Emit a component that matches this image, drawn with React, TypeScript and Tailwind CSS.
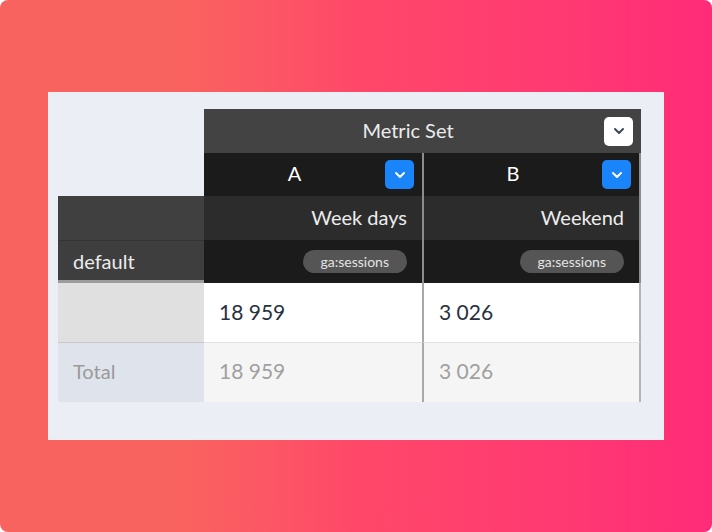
import { ChevronDown } from "lucide-react";

type Col = { key: string; label: string; name: string; metric: string; value: string; total: string };

const cols: Col[] = [
  { key: "a", label: "A", name: "Week days", metric: "ga:sessions", value: "18 959", total: "18 959" },
  { key: "b", label: "B", name: "Weekend", metric: "ga:sessions", value: "3 026", total: "3 026" },
];

function DropButton({ light }: { light?: boolean }) {
  return (
    <span
      className={`flex h-[29px] w-[29px] shrink-0 items-center justify-center rounded-[5px] ${
        light ? "bg-white text-[#3d4859]" : "bg-[#1a84fb] text-white"
      }`}
    >
      <ChevronDown className="h-4 w-4" strokeWidth={3} />
    </span>
  );
}

export default function App() {
  return (
    <div className="h-[532px] w-[712px] bg-white">
      <div
        className="flex h-full w-full flex-col rounded-[8px] bg-linear-to-r from-[#f9635f] from-25% via-[#ff4869] to-[#ff2b78] pt-[92px] pl-[48px]"
        style={{ fontFamily: "Lato, 'Open Sans', sans-serif" }}
      >
        <div className="w-[616px] h-[348px] bg-[#ebeef4] pt-[17px] pl-[10px]">
          <div className="grid grid-cols-[146px_218px_219px] grid-rows-[44px_43px_44px_43px_60px_59px]">
            {/* metric set header */}
            <div />
            <div className="col-span-2 flex items-center bg-[#434343] pr-[8px] pl-[8px]">
              <span className="flex-1 pb-[2px] text-center text-[20px] text-[#ececec]">Metric Set</span>
              <DropButton light />
            </div>

            {/* A / B */}
            <div />
            {cols.map((c, i) => (
              <div
                key={c.key + "l"}
                className={`flex items-center bg-[#1b1b1b] pr-[8px] ${
                  i === 1 ? "border-l-2 border-r-2 border-[#8c8c8c]" : ""
                }`}
              >
                <span className="flex-1 pb-[3px] text-center text-[20px] text-white">{c.label}</span>
                <DropButton />
              </div>
            ))}

            {/* names */}
            <div className="bg-[#404040]" />
            {cols.map((c, i) => (
              <div
                key={c.key + "n"}
                className={`flex items-center justify-end bg-[#2c2c2c] pr-[15px] pb-[2px] text-[20px] text-[#ececec] ${
                  i === 1 ? "border-l-2 border-r-2 border-[#8c8c8c]" : ""
                }`}
              >
                {c.name}
              </div>
            ))}

            {/* metrics */}
            <div className="flex items-center border-t border-[#343434] border-b-[3px] border-b-[#9c9c9c] bg-[#3e3e3e] pl-[15px] text-[20px] text-[#ececec]">
              default
            </div>
            {cols.map((c, i) => (
              <div
                key={c.key + "m"}
                className={`flex items-center justify-end bg-[#1b1b1b] pr-[15px] ${
                  i === 1 ? "border-l-2 border-r-2 border-[#8c8c8c]" : ""
                }`}
              >
                <span className="rounded-full bg-[#555555] px-[18px] py-[3px] text-[14px] leading-[17px] text-[#e4e4e4]">
                  {c.metric}
                </span>
              </div>
            ))}

            {/* values */}
            <div className="border-b border-[#c8c8c8] bg-[#e0e0e0]" />
            {cols.map((c, i) => (
              <div
                key={c.key + "v"}
                className={`flex items-center border-b border-[#e2e2e2] bg-white pl-[15px] pb-[2px] text-[21px] text-[#283140] ${
                  i === 1 ? "border-l-2 border-r-2 border-l-[#a8a8a8] border-r-[#b4b4b4]" : ""
                }`}
              >
                {c.value}
              </div>
            ))}

            {/* totals */}
            <div className="flex items-center bg-[#dfe3ec] pl-[15px] pb-[3px] text-[20px] text-[#9a9a9a]">Total</div>
            {cols.map((c, i) => (
              <div
                key={c.key + "t"}
                className={`flex items-center bg-[#f5f5f5] pl-[15px] pb-[3px] text-[21px] text-[#a0a0a0] ${
                  i === 1 ? "border-l-2 border-r-2 border-l-[#a8a8a8] border-r-[#b4b4b4]" : ""
                }`}
              >
                {c.total}
              </div>
            ))}
          </div>
        </div>
      </div>
    </div>
  );
}
